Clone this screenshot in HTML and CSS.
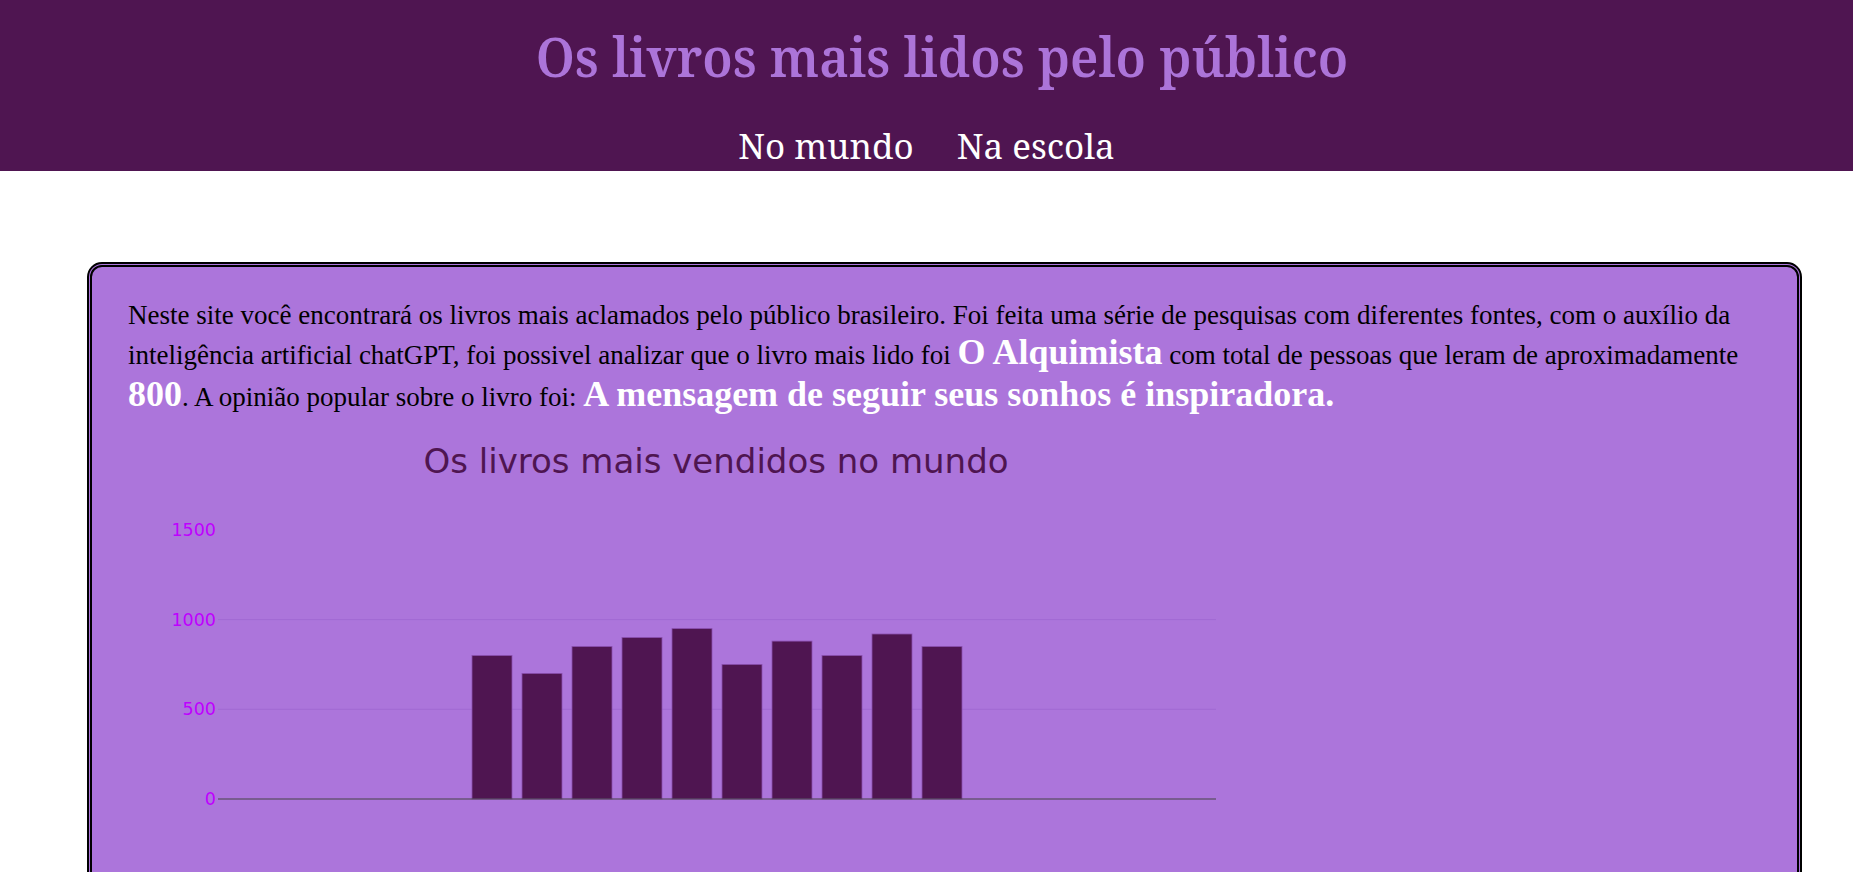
FILE: index.html
```html
<!DOCTYPE html>
<html lang="pt-BR">
<head>
<meta charset="utf-8">
<title>Os livros mais lidos pelo público</title>
<link rel="stylesheet" href="styles.css">
</head>
<body>
<header class="topo">
  <h1 class="titulo">Os livros mais lidos pelo público</h1>
  <nav class="menu">
    <a class="menu-link" href="#">No mundo</a>
    <a class="menu-link" href="#">Na escola</a>
  </nav>
</header>
<main class="caixa">
  <p class="texto">Neste site você encontrará os livros mais aclamados pelo público brasileiro. Foi feita uma série de pesquisas com diferentes fontes, com o auxílio da inteligência artificial chatGPT, foi possivel analizar que o livro mais lido foi <strong class="destaque">O Alquimista</strong> com total de pessoas que leram de aproximadamente <strong class="destaque">800</strong>. A opinião popular sobre o livro foi: <strong class="destaque">A mensagem de seguir seus sonhos é inspiradora.</strong></p>
  <svg class="grafico" width="1140" height="470" viewBox="0 0 1140 470">
    <text class="grafico-titulo" x="588" y="53" text-anchor="middle">Os livros mais vendidos no mundo</text>
    <line class="grade" x1="90" y1="199.6" x2="1088" y2="199.6"/>
    <line class="grade" x1="90" y1="289.3" x2="1088" y2="289.3"/>
    <text class="tick" x="88" y="116" text-anchor="end">1500</text>
    <text class="tick" x="88" y="205.6" text-anchor="end">1000</text>
    <text class="tick" x="88" y="295.3" text-anchor="end">500</text>
    <text class="tick" x="88" y="385" text-anchor="end">0</text>
    <rect class="barra" x="344" y="235.5" width="40" height="143.5"/>
    <rect class="barra" x="394" y="253.4" width="40" height="125.6"/>
    <rect class="barra" x="444" y="226.5" width="40" height="152.5"/>
    <rect class="barra" x="494" y="217.5" width="40" height="161.5"/>
    <rect class="barra" x="544" y="208.6" width="40" height="170.4"/>
    <rect class="barra" x="594" y="244.4" width="40" height="134.6"/>
    <rect class="barra" x="644" y="221.1" width="40" height="157.9"/>
    <rect class="barra" x="694" y="235.5" width="40" height="143.5"/>
    <rect class="barra" x="744" y="214.0" width="40" height="165.0"/>
    <rect class="barra" x="794" y="226.5" width="40" height="152.5"/>
    <line class="eixo" x1="90" y1="379" x2="1088" y2="379"/>
  </svg>
</main>
</body>
</html>
```

FILE: styles.css
```css
html, body {
  margin: 0;
  padding: 0;
  background: #ffffff;
}

body {
  font-family: "Liberation Serif", "Times New Roman", serif;
}

.topo {
  background: #4f1551;
  display: flex;
  flex-direction: column;
  align-items: center;
  padding: 24px 0 5px 0;
  height: 171px;
  box-sizing: border-box;
}

.titulo {
  margin: 0;
  padding-left: 34px;
  font-family: "Noto Serif", "DejaVu Serif", serif;
  font-weight: 650;
  font-stretch: condensed;
  font-size: 55px;
  line-height: 64px;
  color: #ac74d9;
  transform: scaleX(0.925);
}

.menu {
  display: flex;
  gap: 43px;
  margin-top: 38px;
}

.menu-link {
  font-family: "Noto Serif", "DejaVu Serif", serif;
  font-size: 35px;
  line-height: 40px;
  color: #ffffff;
  text-decoration: none;
}

.caixa {
  display: block;
  margin: 91px 51px 0 87px;
  border: 5px double #000000;
  border-radius: 15px;
  background: #ac75db;
  padding: 33px 36px 0 36px;
  min-height: 700px;
}

.texto {
  margin: 0;
  font-size: 27px;
  line-height: normal;
  color: #000000;
}

.destaque {
  font-size: 1.333em;
  font-weight: bold;
  color: #ffffff;
}

.grafico {
  display: block;
  margin-top: 5px;
  overflow: visible;
}

.grafico-titulo {
  font-family: "DejaVu Sans", Verdana, sans-serif;
  font-size: 34px;
  fill: #4f1551;
}

.tick {
  font-family: "DejaVu Sans", Verdana, sans-serif;
  font-size: 17.5px;
  fill: #bf00ff;
}

.grade {
  stroke: #a269d3;
  stroke-width: 1;
}

.eixo {
  stroke: #444444;
  stroke-width: 1.2;
}

.barra {
  fill: #4f1551;
  stroke: #8a4fae;
  stroke-width: 0.8;
}
```
